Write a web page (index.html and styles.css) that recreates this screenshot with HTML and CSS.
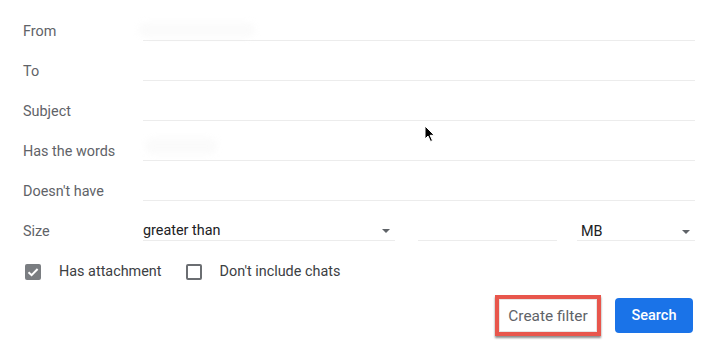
FILE: index.html
```html
<!DOCTYPE html>
<html>
<head>
<meta charset="utf-8">
<link rel="stylesheet" href="styles.css">
</head>
<body>
<div class="form">
  <div class="row">
    <div class="label">From</div>
    <div class="field"><span class="blur blur-from"></span></div>
  </div>
  <div class="row">
    <div class="label">To</div>
    <div class="field"></div>
  </div>
  <div class="row">
    <div class="label">Subject</div>
    <div class="field"></div>
  </div>
  <div class="row">
    <div class="label">Has the words</div>
    <div class="field"><span class="blur blur-words"></span></div>
  </div>
  <div class="row">
    <div class="label">Doesn't have</div>
    <div class="field"></div>
  </div>
  <div class="row">
    <div class="label">Size</div>
    <div class="size-fields">
      <div class="field select sel-cmp">greater than<span class="caret"></span></div>
      <div class="field num"></div>
      <div class="field select sel-unit">MB<span class="caret"></span></div>
    </div>
  </div>
  <div class="checks">
    <label class="check"><span class="box checked"><svg viewBox="0 0 16 16" width="16" height="16"><path d="M3.5 8.2 L6.6 11.2 L12.6 5" fill="none" stroke="#fff" stroke-width="2"/></svg></span><span class="check-text">Has attachment</span></label>
    <label class="check"><span class="box"></span><span class="check-text">Don't include chats</span></label>
  </div>
  <div class="actions">
    <div class="highlight"><button class="btn-filter">Create filter</button></div>
    <button class="btn-search">Search</button>
  </div>
</div>
<svg class="cursor" width="12" height="18" viewBox="0 0 12 18"><path d="M1 1 L1 14 L4 11 L6.5 16.5 L8.5 15.6 L6.1 10.3 L10.3 10.3 Z" fill="#000" stroke="#fff" stroke-width="1"/></svg>
</body>
</html>
```
FILE: styles.css
```css
html, body {
  margin: 0;
  padding: 0;
  background: #fff;
}
body {
  font-family: Roboto, "Liberation Sans", Arial, sans-serif;
  font-size: 14.4px;
  color: #5f6368;
  width: 717px;
  height: 357px;
  overflow: hidden;
  position: relative;
}
.form {
  padding: 1px 22px 0 23px;
}
.row {
  display: flex;
  align-items: flex-end;
  height: 40px;
}
.label {
  width: 120px;
  flex: none;
  line-height: 18px;
}
.field {
  flex: 1;
  height: 18px;
  line-height: 18px;
  border-bottom: 1px solid #ececec;
  position: relative;
  color: #202124;
}
.blur {
  position: absolute;
  background: #f4f4f4;
  filter: blur(3px);
  border-radius: 8px;
}
.blur-from { left: -4px; top: 1px; width: 116px; height: 14px; opacity: .4; }
.blur-words { left: 2px; top: -4px; width: 72px; height: 16px; opacity: .4; }
.size-fields {
  flex: 1;
  display: flex;
  align-items: flex-end;
}
.select { position: relative; }
.sel-cmp { flex: none; width: 252px; }
.num { flex: none; width: 139px; margin-left: 23px; }
.sel-unit { flex: none; width: 118px; margin-left: 20px; padding-left: 4px; box-sizing: border-box; }
.caret {
  position: absolute;
  right: 5px;
  top: 7px;
  width: 0;
  height: 0;
  border-left: 4px solid transparent;
  border-right: 4px solid transparent;
  border-top: 4px solid #5f6368;
}
.checks {
  display: flex;
  align-items: center;
  height: 20px;
  margin-top: 21px;
  padding-left: 2px;
}
.check {
  display: flex;
  align-items: center;
  margin-right: 24px;
  color: #3c4043;
}
.box {
  width: 16px;
  height: 16px;
  box-sizing: border-box;
  border: 2px solid #6b6e72;
  border-radius: 2px;
  margin-right: 18px;
  display: flex;
}
.box.checked {
  background: #7a7d81;
  border: none;
}
.check-text { line-height: 20px; }
.actions {
  display: flex;
  justify-content: flex-end;
  align-items: center;
  margin-top: 13px;
  padding-right: 2px;
}
.highlight {
  border: 4px solid #e8564c;
  box-shadow: 0 2px 2px rgba(0,0,0,.45);
  margin-right: 14px;
}
.btn-filter {
  display: block;
  width: 98px;
  height: 33px;
  border: 1px solid #e6e6e6;
  background: #fff;
  font-family: Roboto, "Liberation Sans", Arial, sans-serif;
  font-size: 15.4px;
  font-weight: 400;
  color: #5f6368;
  padding: 0;
}
.btn-search {
  width: 78px;
  height: 35px;
  border: none;
  border-radius: 4px;
  background: #1a73e8;
  color: #fff;
  font-family: Roboto, "Liberation Sans", Arial, sans-serif;
  font-size: 14.5px;
  font-weight: 500;
  padding: 0;
}
.cursor {
  position: absolute;
  left: 424px;
  top: 125px;
}
```
